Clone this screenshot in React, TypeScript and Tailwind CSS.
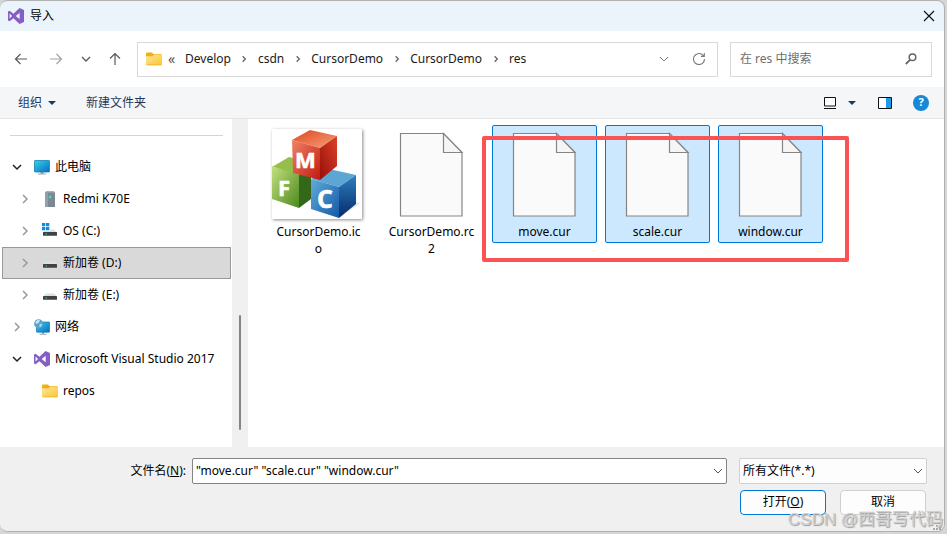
import React from 'react';
import type { ReactNode } from 'react';

interface IconProps {
  className?: string;
}

const VisualStudioIcon = ({ className = 'size-4' }: IconProps) => (
  <svg viewBox="0 0 24 24" className={className} aria-hidden="true">
    <path
      fill="#865fc5"
      fillRule="evenodd"
      d="M17.3 0 24 3v18l-6.700 3-9.100-8.700L2.300 20 0 18.800V5.200L2.300 4l5.900 4.700zM2.400 8.300v7.400L6 12zM17.500 7.300 11.600 12l5.900 4.700z"
    />
  </svg>
);

const FolderIcon = () => (
  <svg viewBox="0 0 16 16" className="size-4 shrink-0" aria-hidden="true">
    <defs>
      <linearGradient id="folder" x1="0" y1="0" x2="1" y2="1">
        <stop offset="0" stopColor="#ffe69a" />
        <stop offset="1" stopColor="#fcc532" />
      </linearGradient>
    </defs>
    <path fill="#f0b10d" d="M0 2.500A1 1 0 0 1 1 1.500h5l1.600 1.700H15a1 1 0 0 1 1 1V8H0z" />
    <path fill="url(#folder)" d="M0 5.200h6.500L8 4h8v9a1 1 0 0 1-1 1H1a1 1 0 0 1-1-1z" />
    <path stroke="#e8ac26" strokeWidth=".8" d="M.6 13.900h14.800" />
  </svg>
);

const ComputerIcon = () => (
  <svg viewBox="0 0 16 16" className="size-4 shrink-0" aria-hidden="true">
    <defs>
      <linearGradient id="screen" x1="0" y1="0" x2="1" y2="1">
        <stop offset="0" stopColor="#33d3ea" />
        <stop offset="1" stopColor="#0a6cbe" />
      </linearGradient>
    </defs>
    <path fill="#9aa7b0" d="M6.500 13h3v1.500H12v1H4v-1h2.500z" />
    <rect x=".5" y="1.500" width="15" height="11.500" rx=".6" fill="url(#screen)" stroke="#1482b4" strokeWidth=".8" />
  </svg>
);

const PhoneIcon = () => (
  <svg viewBox="0 0 16 16" className="size-4 shrink-0" aria-hidden="true">
    <path fill="#a7b1b8" d="M4 0h8l1 2H3z" />
    <rect x="3" y="1.500" width="10" height="14.500" fill="#7c8992" />
    <path fill="#94a0a8" d="M3 1.500h3V16H3z" />
    <circle cx="8" cy="6" r="1.400" fill="#35d9e8" />
  </svg>
);

const DriveIcon = ({ system = false }: { system?: boolean }) => (
  <svg viewBox="0 0 16 16" className="size-4 shrink-0" aria-hidden="true">
    <path fill="#dfe0e1" d="M4 6.500h8l3 3H1z" />
    <rect x="1" y="9" width="14" height="3.800" rx=".5" fill="#404345" />
    <rect x="3.500" y="10.400" width="1.500" height="1" fill="#2fe04a" />
    {system && (
      <>
        <path fill="#fff" d="M0 0h8v8H0z" />
        <path fill="#0f8ddb" d="M0 0h3.300v3.300H0zM4 0h3.300v3.300H4zM0 4h3.300v3.300H0zM4 4h3.300v3.300H4z" />
      </>
    )}
  </svg>
);

const NetworkIcon = () => (
  <svg viewBox="0 0 16 16" className="size-4 shrink-0" aria-hidden="true">
    <path fill="#9aa7b0" d="M8 13h2v1.800h2.500v.9h-7v-.9H8z" />
    <rect x="2.500" y="3" width="13" height="10.200" rx=".5" fill="url(#screen)" stroke="#1378ae" strokeWidth=".7" />
    <circle cx="4.600" cy="4.800" r="4.500" fill="#5aa3cf" />
    <path fill="#c5e2ee" d="M1 3.500 3.500.8 6 1.200 5 3.500 2.800 5zM5.500 5.500l2.500-.8-.8 2.600-1.700 1z" />
  </svg>
);

const PageIcon = () => (
  <svg viewBox="0 0 96 96" className="size-24" aria-hidden="true">
    <path d="M16.500 7.500h43l18.500 19v63.500H16.500z" fill="#fafafa" stroke="#858585" strokeWidth="1.200" />
    <path d="M59.500 7.500v19H78z" fill="#f5f5f5" stroke="#858585" strokeWidth="1.200" />
  </svg>
);

const CubesIcon = () => (
  <svg viewBox="0 0 90 90" className="size-[90px]" aria-hidden="true">
    <defs>
      <linearGradient id="redTop" x1="0" y1="0" x2="1" y2="1">
        <stop offset="0" stopColor="#e0451f" />
        <stop offset="1" stopColor="#f7a27a" />
      </linearGradient>
      <linearGradient id="redLeft" x1="0" y1="0" x2="1" y2="1">
        <stop offset="0" stopColor="#ee8468" />
        <stop offset="1" stopColor="#c21a10" />
      </linearGradient>
      <linearGradient id="redRight" x1="1" y1="0" x2="0" y2="1">
        <stop offset="0" stopColor="#dc4227" />
        <stop offset="1" stopColor="#970f0a" />
      </linearGradient>
      <linearGradient id="greenLeft" x1="0" y1="0" x2="1" y2="1">
        <stop offset="0" stopColor="#c3e07f" />
        <stop offset="1" stopColor="#4c8a1c" />
      </linearGradient>
      <linearGradient id="blueLeft" x1="0" y1="0" x2="1" y2="1">
        <stop offset="0" stopColor="#62abd9" />
        <stop offset="1" stopColor="#1459a8" />
      </linearGradient>
      <linearGradient id="blueRight" x1="0" y1="0" x2="0" y2="1">
        <stop offset="0" stopColor="#2c80bd" />
        <stop offset="1" stopColor="#06296b" />
      </linearGradient>
    </defs>
    <path fill="#e8e8e8" d="M66 89 89 74l-5-1z" />
    <path fill="#95bf4a" d="M0 38 17 28l22 6v14l-12 8z" />
    <path fill="url(#greenLeft)" d="M0 37 27 46v33L0 70z" />
    <path fill="#33681a" d="m27 46 12-4v28L27 79z" />
    <path fill="#5ba6d3" d="M39 50 57 40l27 6-17 12z" />
    <path fill="url(#blueLeft)" d="m39 50 28 8v31l-28-9z" />
    <path fill="url(#blueRight)" d="m67 58 17-12v29L67 89z" />
    <path fill="url(#redTop)" d="M20 11 38 1l27 6-17 12z" />
    <path fill="url(#redLeft)" d="m20 11 28 8v32l-27-7z" />
    <path fill="url(#redRight)" d="M48 19 65 7v30L48 51z" />
    <g fill="#fff" stroke="#fff" strokeWidth=".6" fontFamily="Open Sans, sans-serif" fontWeight="700">
      <text x="23" y="39" fontSize="22">M</text>
      <text x="6" y="67" fontSize="22">F</text>
      <text x="45" y="79" fontSize="25">C</text>
    </g>
  </svg>
);

const Chevron = ({ dir, className = 'size-3' }: { dir: 'down' | 'right'; className?: string }) => (
  <svg viewBox="0 0 12 12" className={className} fill="none" stroke="currentColor" aria-hidden="true">
    <path d={dir === 'down' ? 'M2 4l4 4 4-4' : 'M4 2l4 4-4 4'} />
  </svg>
);

const Caret = () => (
  <svg viewBox="0 0 8 4" className="h-1 w-2" fill="#1e395b" aria-hidden="true">
    <path d="M0 0h8L4 4z" />
  </svg>
);

const Arrow = ({ d }: { d: string }) => (
  <svg viewBox="0 0 14 14" className="size-3.5" fill="none" stroke="currentColor" strokeWidth="1.200" aria-hidden="true">
    <path d={d} />
  </svg>
);

const crumbs = ['Develop', 'csdn', 'CursorDemo', 'CursorDemo', 'res'];

interface TreeItem {
  label: string;
  icon: ReactNode;
  nested?: boolean;
  open?: boolean;
  leaf?: boolean;
  selected?: boolean;
}

const tree: TreeItem[] = [
  { label: '此电脑', icon: <ComputerIcon />, open: true },
  { label: 'Redmi K70E', icon: <PhoneIcon />, nested: true },
  { label: 'OS (C:)', icon: <DriveIcon system />, nested: true },
  { label: '新加卷 (D:)', icon: <DriveIcon />, nested: true, selected: true },
  { label: '新加卷 (E:)', icon: <DriveIcon />, nested: true },
  { label: '网络', icon: <NetworkIcon /> },
  { label: 'Microsoft Visual Studio 2017', icon: <VisualStudioIcon className="size-4 shrink-0" />, open: true },
  { label: 'repos', icon: <FolderIcon />, nested: true, leaf: true },
];

const files = [
  { name: 'CursorDemo.ico', thumb: true, selected: false },
  { name: 'CursorDemo.rc2', thumb: false, selected: false },
  { name: 'move.cur', thumb: false, selected: true },
  { name: 'scale.cur', thumb: false, selected: true },
  { name: 'window.cur', thumb: false, selected: true },
];

const TitleBar = () => (
  <header className="flex h-[30px] items-center justify-between bg-[#ebf3fb] pr-[9px] pl-2">
    <div className="flex items-center gap-1.5">
      <VisualStudioIcon />
      <h1>导入</h1>
    </div>
    <button type="button" aria-label="关闭">
      <svg viewBox="0 0 12 12" className="size-3" stroke="#111" strokeWidth="1.200" aria-hidden="true">
        <path d="M1 1l10 10M11 1 1 11" />
      </svg>
    </button>
  </header>
);

const NavBar = () => (
  <div className="flex h-14 items-center bg-white pr-3">
    <nav className="flex w-[137px] shrink-0 items-center pl-3.5 text-[#5a5a5a]">
      <button type="button" aria-label="后退">
        <Arrow d="M13 7H1.500M6.500 2l-5 5 5 5" />
      </button>
      <button type="button" aria-label="前进" className="ml-[21px] text-[#a3a3a3]">
        <Arrow d="M1 7h11.500M7.500 2l5 5-5 5" />
      </button>
      <button type="button" aria-label="最近浏览的位置" className="ml-[17px]">
        <Chevron dir="down" className="size-3 stroke-[1.3]" />
      </button>
      <button type="button" aria-label="向上" className="ml-4">
        <Arrow d="M7 13V1.500M2 6.500l5-5 5 5" />
      </button>
    </nav>
    <div className="flex h-[35px] flex-1 items-center border border-[#d9d9d9] pl-2">
      <FolderIcon />
      <span className="w-[23px] pl-1.5 text-sm text-[#555]">«</span>
      {crumbs.map((crumb, i) => (
        <React.Fragment key={i}>
          {i > 0 && (
            <span className="flex w-[27px] justify-center text-[#666]">
              <Chevron dir="right" className="size-2 stroke-2" />
            </span>
          )}
          <a href="#" className="text-[#1a1a1a]">{crumb}</a>
        </React.Fragment>
      ))}
      <button type="button" aria-label="以前的位置" className="ml-auto text-[#777]">
        <Chevron dir="down" />
      </button>
      <button type="button" aria-label="刷新" className="mr-[11px] ml-[22px]">
        <svg viewBox="0 0 14 14" className="size-3.5" fill="none" stroke="#777" strokeWidth="1.100" aria-hidden="true">
          <path d="M12.500 7A5.500 5.500 0 1 1 10.500 2.800L12 4.200M12.300 1v3.400H9" />
        </svg>
      </button>
    </div>
    <label className="ml-3 flex h-[35px] w-[202px] items-center border border-[#d9d9d9] pr-3.5 pl-[9px]">
      <input
        type="search"
        aria-label="搜索"
        placeholder="在 res 中搜索"
        className="min-w-0 flex-1 outline-none placeholder:text-[#6d6d6d]"
      />
      <svg viewBox="0 0 12 12" className="size-3" fill="none" stroke="#666" aria-hidden="true">
        <circle cx="7.500" cy="4.300" r="3.300" strokeWidth="1.500" />
        <path d="M5 6.800.8 11" strokeWidth="1.800" />
      </svg>
    </label>
  </div>
);

const Toolbar = () => (
  <div className="flex h-8 items-center border-b border-[#e5e5e5] bg-[#f5f6f7] pr-[15px] pl-[18px] text-[#1e395b]">
    <button type="button" className="flex items-center gap-1.5">
      组织
      <Caret />
    </button>
    <button type="button" className="ml-[30px]">新建文件夹</button>
    <button type="button" aria-label="更改视图" className="ml-auto flex items-center gap-3">
      <svg viewBox="0 0 12 12" className="size-3" fill="#fff" stroke="#111" aria-hidden="true">
        <path d="M.5.5h11v8.500H.5zM0 11.500h12" />
      </svg>
      <Caret />
    </button>
    <button type="button" aria-label="显示预览窗格" className="ml-[22px]">
      <svg viewBox="0 0 14 12" className="h-3 w-3.5" aria-hidden="true">
        <path fill="#fff" stroke="#111" d="M.5.500h13v11H.5z" />
        <path fill="#1e9be8" d="M8 1h5v10H8z" />
      </svg>
    </button>
    <button
      type="button"
      aria-label="获取帮助"
      className="ml-[21px] flex size-4 items-center justify-center rounded-full bg-[#1787d8] text-[11px] font-bold text-white"
    >
      ?
    </button>
  </div>
);

const Sidebar = () => (
  <aside className="flex w-[248px] shrink-0 bg-white">
    <div className="flex-1">
      <hr className="mt-4 mr-[9px] mb-[15px] ml-2.5 border-[#d5d5d5]" />
      <ul className="pr-px pl-0.5">
        {tree.map((item) => (
          <li key={item.label}>
            <button
              type="button"
              className={`flex h-8 w-full items-center border ${item.nested ? 'pl-4' : 'pl-2'} ${
                item.selected ? 'border-[#999] bg-[#d9d9d9]' : 'border-transparent'
              }`}
            >
              <span className={`mr-[11px] w-3 ${item.open ? 'text-[#222]' : 'text-[#999]'}`}>
                {!item.leaf && <Chevron dir={item.open ? 'down' : 'right'} className="size-3 stroke-[1.5]" />}
              </span>
              {item.icon}
              <span className="ml-[5px] whitespace-nowrap">{item.label}</span>
            </button>
          </li>
        ))}
      </ul>
    </div>
    <div className="flex w-4 flex-col items-center bg-[#f0f0f0] pb-[17px]">
      <div className="mt-auto h-[115px] w-0.5 rounded-full bg-[#858585]" />
    </div>
  </aside>
);

const FileList = () => (
  <main className="relative flex-1 bg-white pt-1.5 pl-[18px]">
    <div className="flex flex-wrap items-start gap-2">
      {files.map((file) => (
        <button
          key={file.name}
          type="button"
          aria-pressed={file.selected}
          className={`flex w-[105px] flex-col items-center rounded-xs border pb-0.5 ${
            file.selected ? 'border-[#0078d7] bg-[#cce8ff]' : 'border-transparent'
          }`}
        >
          <span className="mb-px flex size-24 items-center justify-center">
            {file.thumb ? (
              <span className="mr-[3px] bg-white shadow-[1px_1px_3px_rgba(0,0,0,0.45)]">
                <CubesIcon />
              </span>
            ) : (
              <PageIcon />
            )}
          </span>
          <span className="w-[90px] text-center leading-[17px] break-all">{file.name}</span>
        </button>
      ))}
    </div>
    <div className="pointer-events-none absolute top-[17px] left-[234px] h-[126px] w-[367px] rounded-xs border-4 border-[#fb5254]" />
  </main>
);

const Footer = () => (
  <footer className="bg-[#f0f0f0] pt-[11px] pr-[17px] pb-4">
    <div className="flex items-center">
      <label htmlFor="filename" className="w-[192px] shrink-0 pr-1.5 text-right">
        文件名(<u>N</u>):
      </label>
      <div className="flex h-[26px] flex-1 items-center rounded-xs border border-[#858585] bg-white pr-0.5 pl-[3px]">
        <input
          id="filename"
          type="text"
          defaultValue={'"move.cur" "scale.cur" "window.cur"'}
          className="min-w-0 flex-1 outline-none"
        />
        <button type="button" aria-label="文件名历史" className="text-[#555]">
          <Chevron dir="down" />
        </button>
      </div>
      <div className="ml-3 grid w-[188px] items-center">
        <select
          aria-label="文件类型"
          className="col-start-1 row-start-1 h-[26px] appearance-none rounded-xs border border-[#d0d0d0] bg-[#fdfdfd] pl-[3px]"
        >
          <option>所有文件(*.*)</option>
        </select>
        <span className="pointer-events-none col-start-1 row-start-1 mr-[3px] justify-self-end text-[#555]">
          <Chevron dir="down" />
        </span>
      </div>
    </div>
    <div className="mt-1.5 mr-px flex justify-end gap-3.5">
      <button type="button" className="h-[25px] w-[86px] rounded-sm border border-[#0078d4] bg-[#fdfdfd] pb-0.5">
        打开(<u>O</u>)
      </button>
      <button type="button" className="h-[25px] w-[86px] rounded-sm border border-[#d0d0d0] bg-[#fdfdfd] pb-0.5">
        取消
      </button>
    </div>
  </footer>
);

const ResizeGrip = () => (
  <svg viewBox="0 0 8 8" className="absolute right-1.5 bottom-1 size-2" fill="#a8a8a8" aria-hidden="true">
    <path d="M6 0h2v2H6zM3 3h2v2H3zM6 3h2v2H6zM0 6h2v2H0zM3 6h2v2H3zM6 6h2v2H6z" />
  </svg>
);

export default function App() {
  return (
    <div className="relative flex min-h-screen flex-col bg-[#d6d6d6] pr-0.5 pb-0.5 font-['Noto_Sans','Noto_Sans_CJK_SC',sans-serif] text-xs text-black">
      <div className="flex flex-1 flex-col overflow-hidden rounded-lg border border-l-0 border-[#b0b0b0]">
        <TitleBar />
        <NavBar />
        <Toolbar />
        <div className="flex flex-1">
          <Sidebar />
          <FileList />
        </div>
        <Footer />
      </div>
      <ResizeGrip />
      <p className="pointer-events-none absolute right-1 bottom-0.5 font-['Liberation_Sans','Noto_Sans_CJK_SC',sans-serif] text-[17px] leading-6 text-[#cfcfcf] [text-shadow:1px_1px_1px_#999]">
        CSDN @西哥写代码
      </p>
    </div>
  );
}
